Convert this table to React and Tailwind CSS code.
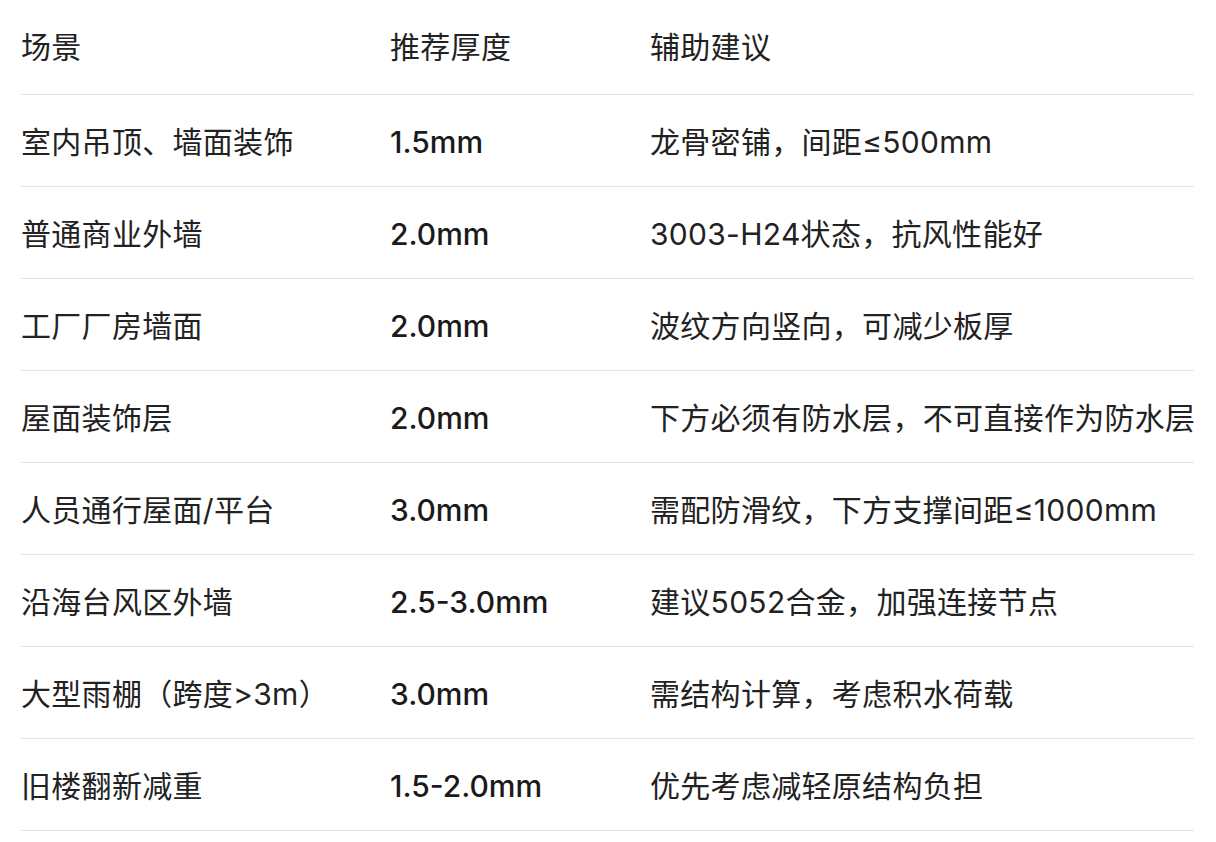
import React from "react";

const rows = [
  ["室内吊顶、墙面装饰", "1.5mm", "龙骨密铺，间距≤500mm"],
  ["普通商业外墙", "2.0mm", "3003-H24状态，抗风性能好"],
  ["工厂厂房墙面", "2.0mm", "波纹方向竖向，可减少板厚"],
  ["屋面装饰层", "2.0mm", "下方必须有防水层，不可直接作为防水层"],
  ["人员通行屋面/平台", "3.0mm", "需配防滑纹，下方支撑间距≤1000mm"],
  ["沿海台风区外墙", "2.5-3.0mm", "建议5052合金，加强连接节点"],
  ["大型雨棚（跨度>3m）", "3.0mm", "需结构计算，考虑积水荷载"],
  ["旧楼翻新减重", "1.5-2.0mm", "优先考虑减轻原结构负担"],
];

export default function App() {
  return (
    <div
      className="min-h-[842px] bg-white pl-[21px] pr-[22px] text-[30px] leading-none text-[#222222]"
      style={{ fontFamily: 'Inter, "Noto Sans CJK SC", sans-serif' }}
    >
      <div className="grid grid-cols-[369px_260px_544px] h-[95px] border-b border-[#e3e3e3] items-center tracking-[0.3px]">
        <div>场景</div>
        <div>推荐厚度</div>
        <div>辅助建议</div>
      </div>
      {rows.map((r, i) => (
        <div
          key={i}
          className="grid grid-cols-[369px_260px_544px] h-[92px] border-b border-[#e3e3e3] items-center pt-[3px]"
        >
          <div className="whitespace-nowrap tracking-[0.3px]">{r[0]}</div>
          <div className="font-medium text-[#1a1a1a]">{r[1]}</div>
          <div className="whitespace-nowrap tracking-[0.3px]">{r[2]}</div>
        </div>
      ))}
    </div>
  );
}
